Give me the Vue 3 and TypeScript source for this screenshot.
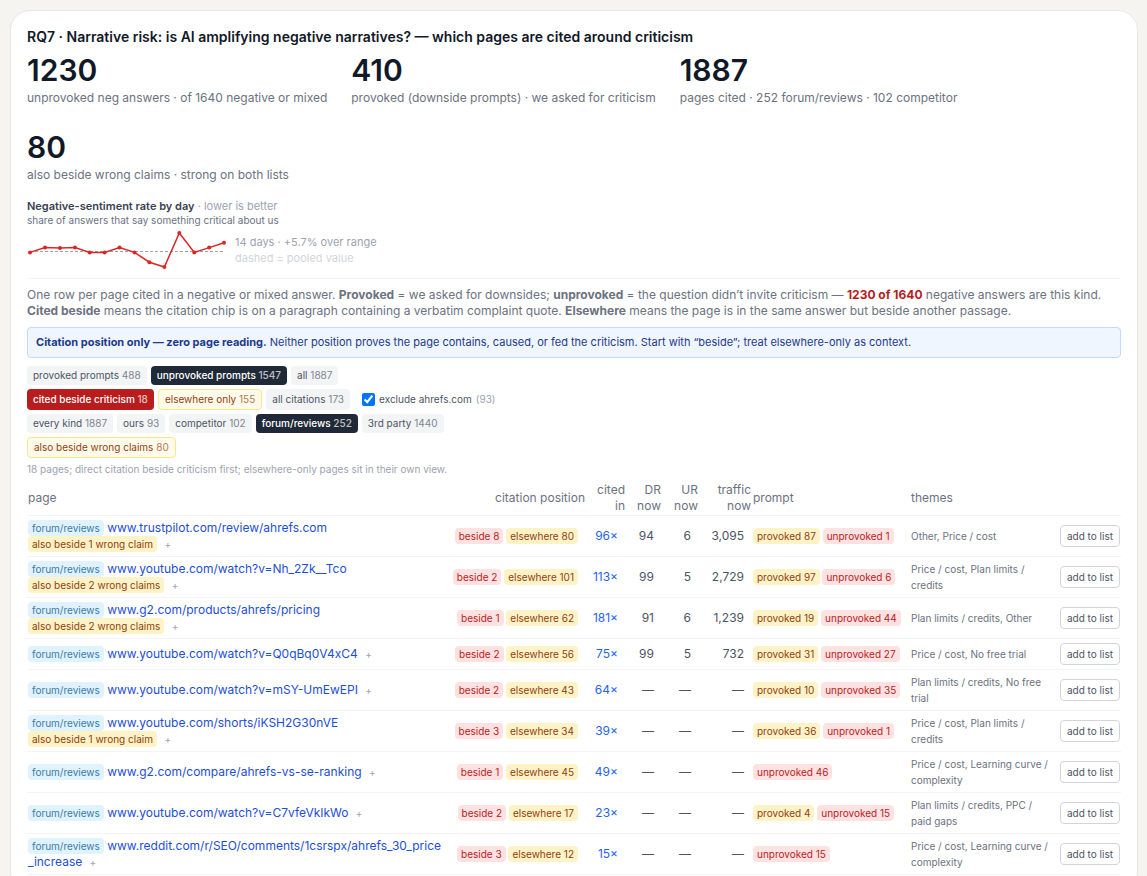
<script setup lang="ts">
import { computed, ref } from 'vue'

interface Stat {
  value: string
  label: string
}

interface Filter {
  label: string
  count: number
  tone?: 'dark' | 'red' | 'amber'
}

interface PageRow {
  url: string
  wrong?: number
  beside: number
  elsewhere: number
  cited: number
  dr?: number
  ur?: number
  traffic?: string
  provoked?: number
  unprovoked: number
  themes: string
}

const stats: Stat[] = [
  { value: '1230', label: 'unprovoked neg answers · of 1640 negative or mixed' },
  { value: '410', label: 'provoked (downside prompts) · we asked for criticism' },
  { value: '1887', label: 'pages cited · 252 forum/reviews · 102 competitor' },
  { value: '80', label: 'also beside wrong claims · strong on both lists' },
]

const promptFilters: Filter[] = [
  { label: 'provoked prompts', count: 488 },
  { label: 'unprovoked prompts', count: 1547, tone: 'dark' },
  { label: 'all', count: 1887 },
]

const positionFilters: Filter[] = [
  { label: 'cited beside criticism', count: 18, tone: 'red' },
  { label: 'elsewhere only', count: 155, tone: 'amber' },
  { label: 'all citations', count: 173 },
]

const kindFilters: Filter[] = [
  { label: 'every kind', count: 1887 },
  { label: 'ours', count: 93 },
  { label: 'competitor', count: 102 },
  { label: 'forum/reviews', count: 252, tone: 'dark' },
  { label: '3rd party', count: 1440 },
]

const excludeOwn = ref(true)

const rows: PageRow[] = [
  { url: 'www.trustpilot.com/review/ahrefs.com', wrong: 1, beside: 8, elsewhere: 80, cited: 96, dr: 94, ur: 6, traffic: '3,095', provoked: 87, unprovoked: 1, themes: 'Other, Price / cost' },
  { url: 'www.youtube.com/watch?v=Nh_2Zk__Tco', wrong: 2, beside: 2, elsewhere: 101, cited: 113, dr: 99, ur: 5, traffic: '2,729', provoked: 97, unprovoked: 6, themes: 'Price / cost, Plan limits / credits' },
  { url: 'www.g2.com/products/ahrefs/pricing', wrong: 2, beside: 1, elsewhere: 62, cited: 181, dr: 91, ur: 6, traffic: '1,239', provoked: 19, unprovoked: 44, themes: 'Plan limits / credits, Other' },
  { url: 'www.youtube.com/watch?v=Q0qBq0V4xC4', beside: 2, elsewhere: 56, cited: 75, dr: 99, ur: 5, traffic: '732', provoked: 31, unprovoked: 27, themes: 'Price / cost, No free trial' },
  { url: 'www.youtube.com/watch?v=mSY-UmEwEPI', beside: 2, elsewhere: 43, cited: 64, provoked: 10, unprovoked: 35, themes: 'Plan limits / credits, No free trial' },
  { url: 'www.youtube.com/shorts/iKSH2G30nVE', wrong: 1, beside: 3, elsewhere: 34, cited: 39, provoked: 36, unprovoked: 1, themes: 'Price / cost, Plan limits / credits' },
  { url: 'www.g2.com/compare/ahrefs-vs-se-ranking', beside: 1, elsewhere: 45, cited: 49, unprovoked: 46, themes: 'Price / cost, Learning curve / complexity' },
  { url: 'www.youtube.com/watch?v=C7vfeVkIkWo', beside: 2, elsewhere: 17, cited: 23, provoked: 4, unprovoked: 15, themes: 'Plan limits / credits, PPC / paid gaps' },
  { url: 'www.reddit.com/r/SEO/comments/1csrspx/ahrefs_30_price_increase', beside: 3, elsewhere: 12, cited: 15, unprovoked: 15, themes: 'Price / cost, Learning curve / complexity' },
]

const trend: [number, number][] = [
  [3, 22.4], [18, 17.6], [33, 18], [48, 17.6], [62.7, 22.4], [77.6, 22.4], [92.5, 17.6],
  [107.5, 22.4], [122.4, 32.2], [137.4, 37], [152.3, 3], [167.3, 22.4], [182.2, 17.6], [197, 12.7],
]
const trendLine = computed(() => trend.map((p) => p.join(',')).join(' '))
</script>

<template>
  <main class="page">
    <section class="card">
      <h2 class="title">RQ7 · Narrative risk: is AI amplifying negative narratives? — which pages are cited around criticism</h2>

      <div class="stats">
        <div v-for="s in stats" :key="s.label" class="stat">
          <div class="stat-value">{{ s.value }}</div>
          <div class="stat-label">{{ s.label }}</div>
        </div>
      </div>

      <div class="trend">
        <div class="trend-title"><strong>Negative-sentiment rate by day</strong> · lower is better</div>
        <div class="trend-sub">share of answers that say something critical about us</div>
        <div class="trend-body">
          <svg class="spark" width="200" height="40" viewBox="0 0 200 40" role="img" aria-label="Negative-sentiment rate by day">
            <line x1="3" y1="21.5" x2="197" y2="21.5" stroke="#9ca3af" stroke-width="1" stroke-dasharray="3 2" />
            <polyline :points="trendLine" fill="none" stroke="#dc2626" stroke-width="1.5" />
            <circle v-for="(p, i) in trend" :key="i" :cx="p[0]" :cy="p[1]" r="2" fill="#dc2626" />
          </svg>
          <div class="trend-note">
            <div>14 days · +5.7% over range</div>
            <div class="faint">dashed = pooled value</div>
          </div>
        </div>
      </div>

      <p class="intro">
        One row per page cited in a negative or mixed answer. <strong>Provoked</strong> = we asked for downsides;
        <strong>unprovoked</strong> = the question didn’t invite criticism — <strong class="alert">1230 of 1640</strong>
        negative answers are this kind. <strong>Cited beside</strong> means the citation chip is on a paragraph
        containing a verbatim complaint quote. <strong>Elsewhere</strong> means the page is in the same answer but
        beside another passage.
      </p>

      <div class="notice">
        <strong>Citation position only — zero page reading.</strong> Neither position proves the page contains, caused,
        or fed the criticism. Start with “beside”; treat elsewhere-only as context.
      </div>

      <div class="filters">
        <div class="filter-row">
          <button v-for="f in promptFilters" :key="f.label" type="button" class="filter" :class="f.tone">{{ f.label }} <span class="count">{{ f.count }}</span></button>
        </div>
        <div class="filter-row">
          <button v-for="f in positionFilters" :key="f.label" type="button" class="filter" :class="f.tone">{{ f.label }} <span class="count">{{ f.count }}</span></button>
          <label class="exclude">
            <input v-model="excludeOwn" type="checkbox" />
            <span>exclude ahrefs.com</span>
            <span class="muted">(93)</span>
          </label>
        </div>
        <div class="filter-row">
          <button v-for="f in kindFilters" :key="f.label" type="button" class="filter" :class="f.tone">{{ f.label }} <span class="count">{{ f.count }}</span></button>
        </div>
        <div class="filter-row">
          <button type="button" class="filter amber">also beside wrong claims <span class="count">80</span></button>
        </div>
      </div>

      <div class="summary">18 pages; direct citation beside criticism first; elsewhere-only pages sit in their own view.</div>

      <table class="table">
        <colgroup>
          <col />
          <col class="c-position" />
          <col class="c-cited" />
          <col class="c-dr" />
          <col class="c-ur" />
          <col class="c-traffic" />
          <col class="c-prompt" />
          <col class="c-themes" />
          <col class="c-action" />
        </colgroup>
        <thead>
          <tr>
            <th>page</th>
            <th class="num">citation position</th>
            <th class="num">cited in</th>
            <th class="num">DR now</th>
            <th class="num">UR now</th>
            <th class="num">traffic now</th>
            <th>prompt</th>
            <th>themes</th>
            <th></th>
          </tr>
        </thead>
        <tbody>
          <tr v-for="r in rows" :key="r.url">
            <td class="source">
              <span class="tag sky">forum/reviews</span>{{ ' ' }}<a href="#" class="url">{{ r.url }}</a>{{ ' ' }}<span v-if="r.wrong" class="tag amber-tag">also beside {{ r.wrong }} wrong claim{{ r.wrong > 1 ? 's' : '' }}</span>{{ ' ' }}<button type="button" class="more">+</button>
            </td>
            <td class="num tags">
              <span class="tag red-tag">beside {{ r.beside }}</span> <span class="tag amber-tag">elsewhere {{ r.elsewhere }}</span>
            </td>
            <td class="num cited">{{ r.cited }}×</td>
            <td class="num">{{ r.dr ?? '—' }}</td>
            <td class="num">{{ r.ur ?? '—' }}</td>
            <td class="num">{{ r.traffic ?? '—' }}</td>
            <td class="tags">
              <template v-if="r.provoked"><span class="tag amber-tag">provoked {{ r.provoked }}</span>{{ ' ' }}</template><span class="tag red-tag">unprovoked {{ r.unprovoked }}</span>
            </td>
            <td class="themes">{{ r.themes }}</td>
            <td class="action"><button type="button" class="add">add to list</button></td>
          </tr>
        </tbody>
      </table>
    </section>
  </main>
</template>

<style>
body {
  background: #f5f4f0;
}
</style>

<style scoped>
.page {
  padding: 10px 9px 10px 10px;
  font-family: Inter, 'Liberation Sans', sans-serif;
  font-size: 12px;
  line-height: 16px;
  color: #6b7280;
}
.page * {
  box-sizing: border-box;
}
button {
  font: inherit;
  margin: 0;
  cursor: pointer;
}
.card {
  background: #fff;
  border: 1px solid #e5e7eb;
  border-radius: 20px;
  padding: 16px;
}
.title {
  margin: 0;
  font-size: 14px;
  line-height: 20px;
  font-weight: 600;
  color: #111827;
}
.stats {
  display: flex;
  flex-wrap: wrap;
  gap: 23px 24px;
  margin-top: 5px;
}
.stat-value {
  font-size: 30px;
  line-height: 36px;
  font-weight: 600;
  color: #111827;
}
.stat-label {
  margin-top: 2px;
}
.trend {
  margin-top: 16px;
  padding-bottom: 8px;
  border-bottom: 1px solid #f3f4f6;
}
.trend-title {
  font-size: 11px;
  line-height: 14px;
  color: #9ca3af;
}
.trend-title strong {
  font-weight: 600;
  color: #374151;
}
.trend-sub {
  margin-bottom: 2px;
  font-size: 10px;
  line-height: 15px;
}
.trend-body {
  display: flex;
  align-items: center;
  gap: 8px;
}
.spark {
  display: block;
}
.trend-note {
  font-size: 11px;
  line-height: 16px;
  color: #9ca3af;
}
.faint {
  color: #d1d5db;
}
.intro {
  margin: 8px 0;
}
.intro strong {
  font-weight: 700;
}
.intro .alert {
  color: #b91c1c;
}
.notice {
  padding: 6px 8px;
  font-size: 11px;
  line-height: 17px;
  color: #1e3a8a;
  background: #eff6ff;
  border: 1px solid #bfdbfe;
  border-radius: 4px;
}
.notice strong {
  font-weight: 700;
}
.filters {
  display: flex;
  flex-direction: column;
  gap: 4px;
  margin-top: 8px;
}
.filter-row {
  display: flex;
  flex-wrap: wrap;
  gap: 4px;
}
.filter {
  padding: 2px 6px;
  border: 0;
  border-radius: 4px;
  font-size: 10px;
  line-height: 15px;
  color: #4b5563;
  background: #f3f4f6;
}
.filter .count {
  opacity: 0.7;
}
.filter.dark {
  color: #fff;
  background: #1f2937;
  font-weight: 500;
}
.filter.red {
  color: #fff;
  background: #b91c1c;
  font-weight: 500;
}
.filter.amber {
  color: #92400e;
  background: #fffbeb;
  border: 1px solid #fde68a;
}
.exclude {
  display: flex;
  align-items: center;
  gap: 4px;
  margin-left: 8px;
  font-size: 10px;
  line-height: 15px;
  color: #4b5563;
}
.exclude input {
  width: 13px;
  height: 13px;
  margin: 0;
}
.muted {
  color: #9ca3af;
}
.summary {
  margin: 4px 0;
  font-size: 10px;
  line-height: 15px;
  color: #9ca3af;
}
.table {
  width: 100%;
  table-layout: fixed;
  border-collapse: collapse;
}
.c-position {
  width: 137px;
}
.c-cited {
  width: 40px;
}
.c-dr {
  width: 36px;
}
.c-ur {
  width: 37px;
}
.c-traffic {
  width: 53px;
}
.c-prompt {
  width: 158px;
}
.c-themes {
  width: 148px;
}
.c-action {
  width: 63px;
}
th {
  padding: 1px;
  font-weight: 400;
  text-align: left;
}
th,
td {
  border-bottom: 1px solid #f3f4f6;
  vertical-align: middle;
}
td {
  padding: 4px 8px 4px 1px;
  color: #4b5563;
}
.num {
  text-align: right;
}
.source {
  padding-right: 4px;
  word-break: break-all;
}
.tags {
  white-space: nowrap;
  font-size: 10px;
}
.tag {
  padding: 2px 4px;
  border-radius: 4px;
  font-size: 10px;
  white-space: nowrap;
}
.sky {
  color: #3a7ca5;
  background: #e0f2fe;
}
.amber-tag {
  color: #92400e;
  background: #fef3c7;
}
.red-tag {
  color: #b91c1c;
  background: #fee2e2;
}
.url {
  color: #1d4ed8;
  text-decoration: none;
}
td.cited {
  color: #2563eb;
}
.more {
  padding: 0;
  margin-left: 4px;
  border: 0;
  background: none;
  font-size: 10px;
  line-height: 15px;
  color: #9ca3af;
}
.themes {
  font-size: 10px;
  color: #6b7280;
}
.action {
  padding-right: 1px;
  text-align: right;
}
.add {
  display: block;
  margin-left: auto;
  padding: 2px 6px;
  border: 1px solid #d1d5db;
  border-radius: 4px;
  background: #fff;
  font-size: 10px;
  line-height: 16px;
  white-space: nowrap;
  color: #4b5563;
}
</style>
